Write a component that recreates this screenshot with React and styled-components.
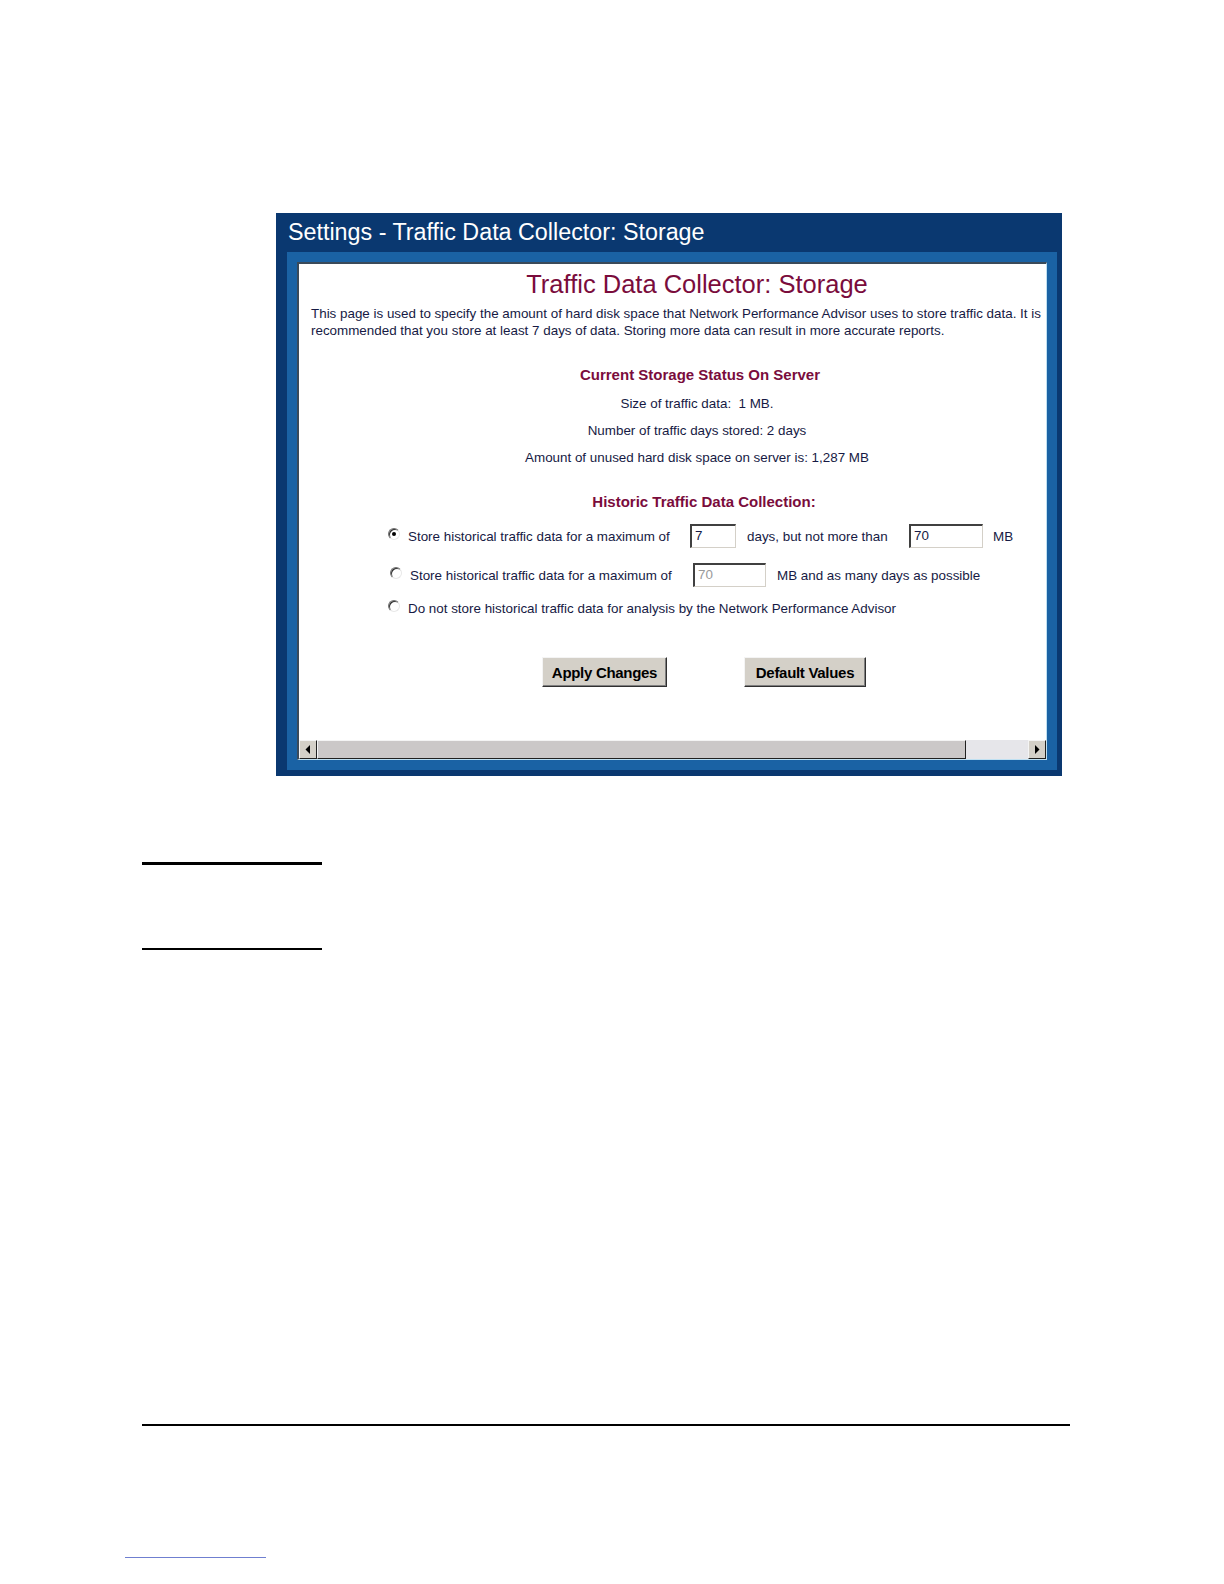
import styled, { createGlobalStyle } from "styled-components";

const Global = createGlobalStyle`
  html, body { margin: 0; padding: 0; background: #fff; }
  body { font-family: "Liberation Sans", Arial, sans-serif; }
`;

const Page = styled.div`
  width: 1224px;
  height: 1584px;
  padding-top: 213px;
  box-sizing: border-box;
`;

const Window = styled.div`
  margin-left: 276px;
  width: 786px;
  height: 563px;
  background: #0a3870;
  display: flex;
  flex-direction: column;
`;

const TitleBar = styled.div`
  height: 39px;
  padding-left: 12px;
  color: #fff;
  font-size: 23.3px;
  line-height: 38px;
  flex-shrink: 0;
`;

const Frame = styled.div`
  flex: 1;
  margin: 0 5px 6px 11px;
  background: #1a62a4;
  padding: 10px;
  display: flex;
`;

const Panel = styled.div`
  flex: 1;
  background: #fff;
  border-style: solid;
  border-width: 2px 1px 1px 2px;
  border-color: #3a4a5a #bfe0f2 #bfe0f2 #3a4a5a;
  display: flex;
  flex-direction: column;
  overflow: hidden;
`;

const Viewport = styled.div`
  flex: 1;
  overflow: hidden;
`;

const Content = styled.div`
  width: 796px;
  color: #161a44;
  font-size: 13.4px;
`;

const Heading = styled.h1`
  margin: 4px 0 0;
  text-align: center;
  color: #7a0c3c;
  font-weight: normal;
  font-size: 25.5px;
  line-height: 32px;
`;

const Intro = styled.p`
  margin: 5px 0 0;
  padding: 0 12px;
  line-height: 17px;
`;

const SubHead = styled.div`
  margin-top: ${(p) => p.$top}px;
  text-align: center;
  color: #7a0c3c;
  font-weight: bold;
  font-size: 15px;
  line-height: 20px;
  padding-left: ${(p) => p.$shift || 0}px;
`;

const StatusList = styled.div`
  margin-top: 5px;
`;

const StatusLine = styled.div`
  text-align: center;
  line-height: 27px;
`;

const Options = styled.div`
  margin-top: 4px;
  padding-left: 89px;
  display: flex;
  flex-direction: column;
`;

const OptionRow = styled.div`
  display: flex;
  align-items: center;
  height: ${(p) => p.$h}px;
  padding-left: ${(p) => p.$indent || 0}px;
`;

const Radio = styled.span`
  width: 12px;
  height: 12px;
  border-radius: 50%;
  box-sizing: border-box;
  border: 1px solid;
  border-color: #707070 #e8e8e8 #e8e8e8 #707070;
  box-shadow: inset 1px 1px 0 #303030;
  background: #fff;
  margin-right: 8px;
  margin-top: -4px;
  display: flex;
  align-items: center;
  justify-content: center;
  flex-shrink: 0;

  &::after {
    content: "";
    width: 4px;
    height: 4px;
    border-radius: 50%;
    background: ${(p) => (p.$on ? "#000" : "transparent")};
  }
`;

const Label = styled.span`
  width: ${(p) => (p.$w ? `${p.$w}px` : "auto")};
  white-space: nowrap;
`;

const Field = styled.span`
  display: inline-block;
  width: ${(p) => p.$w}px;
  height: 24px;
  box-sizing: border-box;
  border-style: solid;
  border-width: 2px 1px 1px 2px;
  border-color: #404040 #d4d0c8 #d4d0c8 #404040;
  padding: 1px 3px;
  line-height: 18px;
  color: ${(p) => (p.$disabled ? "#9a9a9a" : "#161a44")};
  margin-right: ${(p) => p.$gap}px;
  flex-shrink: 0;
`;

const Buttons = styled.div`
  margin-top: 35px;
  display: flex;
  padding-left: 243px;
  gap: 77px;
`;

const Button = styled.button`
  width: ${(p) => p.$w}px;
  height: 30px;
  background: #d4d0c8;
  border: 1px solid;
  border-color: #f4f4f4 #303030 #303030 #f4f4f4;
  box-shadow: inset -1px -1px 0 #808080;
  font-family: "Liberation Sans", Arial, sans-serif;
  font-weight: bold;
  font-size: 15px;
  color: #000;
  padding: 0;
  letter-spacing: -0.3px;
`;

const Scrollbar = styled.div`
  height: 19px;
  display: flex;
  background: #e6e6ea;
  flex-shrink: 0;
`;

const ArrowBtn = styled.div`
  width: 18px;
  height: 19px;
  box-sizing: border-box;
  background: #d4d0c8;
  border: 1px solid;
  border-color: #f4f4f4 #202020 #202020 #f4f4f4;
  display: flex;
  align-items: center;
  justify-content: center;
  flex-shrink: 0;
`;

const Thumb = styled.div`
  width: 649px;
  height: 19px;
  box-sizing: border-box;
  background: #cbc8c8;
  border: 1px solid;
  border-color: #f4f4f4 #202020 #202020 #f4f4f4;
`;

const Track = styled.div`
  flex: 1;
`;

const Rule = styled.div`
  margin-left: ${(p) => p.$left}px;
  width: ${(p) => p.$w}px;
  height: ${(p) => p.$h}px;
  background: ${(p) => p.$color || "#000"};
  margin-top: ${(p) => p.$top}px;
`;

const Arrow = ({ dir }) => (
  <svg width="6" height="9" viewBox="0 0 6 9">
    {dir === "left" ? (
      <polygon points="5,0 5,9 0.5,4.5" fill="#000" />
    ) : (
      <polygon points="1,0 1,9 5.5,4.5" fill="#000" />
    )}
  </svg>
);

export default function App() {
  return (
    <Page>
      <Global />
      <Window>
        <TitleBar>Settings - Traffic Data Collector: Storage</TitleBar>
        <Frame>
          <Panel>
            <Viewport>
              <Content>
                <Heading>Traffic Data Collector: Storage</Heading>
                <Intro>
                  This page is used to specify the amount of hard disk space that Network Performance Advisor uses to store traffic data. It is recommended that you store at least 7 days of data. Storing more data can result in more accurate reports.
                </Intro>
                <SubHead $top={26} $shift={6}>Current Storage Status On Server</SubHead>
                <StatusList>
                  <StatusLine>Size of traffic data:&nbsp; 1 MB.</StatusLine>
                  <StatusLine>Number of traffic days stored: 2 days</StatusLine>
                  <StatusLine>Amount of unused hard disk space on server is: 1,287 MB</StatusLine>
                </StatusList>
                <SubHead $top={21} $shift={14}>Historic Traffic Data Collection:</SubHead>
                <Options>
                  <OptionRow $h={40}>
                    <Radio $on />
                    <Label $w={282}>Store historical traffic data for a maximum of</Label>
                    <Field $w={46} $gap={11}>7</Field>
                    <Label $w={162}>days, but not more than</Label>
                    <Field $w={74} $gap={10}>70</Field>
                    <Label>MB</Label>
                  </OptionRow>
                  <OptionRow $h={38} $indent={2}>
                    <Radio />
                    <Label $w={283}>Store historical traffic data for a maximum of</Label>
                    <Field $w={73} $gap={11} $disabled>70</Field>
                    <Label>MB and as many days as possible</Label>
                  </OptionRow>
                  <OptionRow $h={28}>
                    <Radio />
                    <Label>Do not store historical traffic data for analysis by the Network Performance Advisor</Label>
                  </OptionRow>
                </Options>
                <Buttons>
                  <Button $w={125}>Apply Changes</Button>
                  <Button $w={122}>Default Values</Button>
                </Buttons>
              </Content>
            </Viewport>
            <Scrollbar>
              <ArrowBtn><Arrow dir="left" /></ArrowBtn>
              <Thumb />
              <Track />
              <ArrowBtn><Arrow dir="right" /></ArrowBtn>
            </Scrollbar>
          </Panel>
        </Frame>
      </Window>
      <Rule $left={142} $w={180} $h={3} $top={86} />
      <Rule $left={142} $w={180} $h={2} $top={83} />
      <Rule $left={142} $w={928} $h={2} $top={474} />
      <Rule $left={125} $w={141} $h={1} $top={131} $color="#6f7fd0" />
    </Page>
  );
}
